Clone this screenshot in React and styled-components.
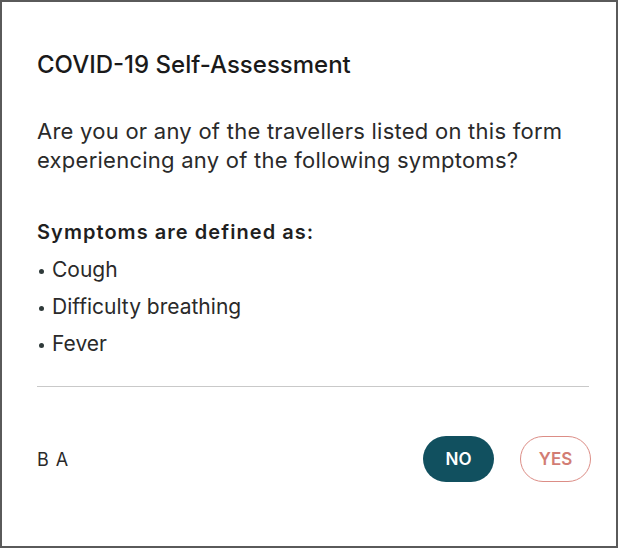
import React from 'react';
import styled, { createGlobalStyle } from 'styled-components';

const Global = createGlobalStyle`
  html, body {
    margin: 0;
    padding: 0;
    background: #fff;
  }
  body {
    font-family: Inter, 'Liberation Sans', Arial, sans-serif;
    color: #1d1d1f;
  }
`;

const Card = styled.div`
  width: 618px;
  height: 548px;
  box-sizing: border-box;
  border: 2px solid #5a5a5a;
  background: #fff;
  padding: 47px 25px 0 35px;
  display: flex;
  flex-direction: column;
`;

const Title = styled.h1`
  margin: 0;
  font-size: 24px;
  font-weight: 500;
  line-height: 32px;
  color: #1a1a1a;
`;

const Question = styled.p`
  margin: 36px 0 0;
  font-size: 22px;
  line-height: 29px;
  letter-spacing: 0.25px;
  color: #2a2a2a;
`;

const Label = styled.h2`
  margin: 45px 0 0;
  font-size: 20px;
  font-weight: 600;
  line-height: 24px;
  letter-spacing: 1.05px;
  color: #1f1f1f;
`;

const List = styled.ul`
  list-style: none;
  margin: 14px 0 0;
  padding: 0;
  display: flex;
  flex-direction: column;
  gap: 13px;
`;

const Item = styled.li`
  font-size: 21px;
  line-height: 24px;
  color: #2a2a2a;
  display: flex;
  align-items: center;
  &::before {
    content: '';
    width: 5px;
    height: 5px;
    border-radius: 50%;
    background: #2f3a3a;
    margin: 2px 8px 0 2px;
  }
`;

const Divider = styled.hr`
  border: 0;
  border-top: 1.5px solid #c9c9c9;
  margin: 30px 2px 0 0;
`;

const Footer = styled.div`
  display: flex;
  align-items: center;
  justify-content: space-between;
  margin-top: 49px;
`;

const Initials = styled.span`
  font-size: 18px;
  letter-spacing: 1px;
  color: #2a2a2a;
`;

const Buttons = styled.div`
  display: flex;
  gap: 26px;
`;

const Choice = styled.button`
  width: 71px;
  height: 46px;
  border-radius: 23px;
  box-sizing: border-box;
  font-family: inherit;
  font-size: 17px;
  font-weight: 600;
  cursor: pointer;
  background: ${p => (p.$active ? '#11505f' : '#fff')};
  color: ${p => (p.$active ? '#fff' : '#d27d74')};
  border: ${p => (p.$active ? '0' : '1.5px solid #dc8d86')};
`;

export default function App() {
  return (
    <>
      <Global />
      <Card>
        <Title>COVID-19 Self-Assessment</Title>
        <Question>
          Are you or any of the travellers listed on this form experiencing any of the following symptoms?
        </Question>
        <Label>Symptoms are defined as:</Label>
        <List>
          <Item>Cough</Item>
          <Item>Difficulty breathing</Item>
          <Item>Fever</Item>
        </List>
        <Divider />
        <Footer>
          <Initials>B A</Initials>
          <Buttons>
            <Choice $active>NO</Choice>
            <Choice>YES</Choice>
          </Buttons>
        </Footer>
      </Card>
    </>
  );
}
